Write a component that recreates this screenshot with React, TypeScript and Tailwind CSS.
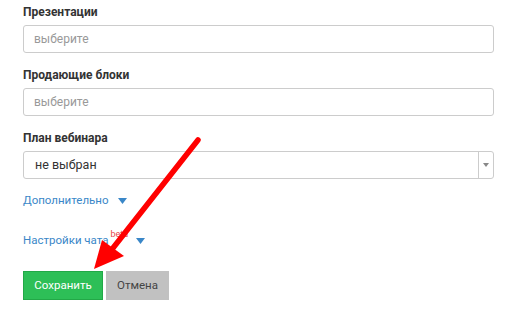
import React from "react";

const Tri = ({ cls }: { cls: string }) => (
  <svg width="9" height="6" viewBox="0 0 9 6" className={cls}>
    <path d="M0 0 L9 0 L4.5 6 Z" fill="currentColor" />
  </svg>
);

export default function App() {
  return (
    <div className="relative w-[519px] h-[312px] bg-white overflow-hidden" style={{ fontFamily: "Roboto, 'Noto Sans', sans-serif" }}>
      <div className="pl-[23px] pt-[4px] w-[494px] flex flex-col">
        <div className="text-[12px] leading-[16px] font-bold text-[#333] mb-[5px]">Презентации</div>
        <div className="h-[28px] border border-[#ccc] rounded-[3px] flex items-center pl-[10px] text-[12px] text-[#999] mb-[14px]">выберите</div>
        <div className="text-[12px] leading-[16px] font-bold text-[#333] mb-[5px]">Продающие блоки</div>
        <div className="h-[28px] border border-[#ccc] rounded-[3px] flex items-center pl-[10px] text-[12px] text-[#999] mb-[14px]">выберите</div>
        <div className="text-[12px] leading-[16px] font-bold text-[#333] mb-[5px]">План вебинара</div>
        <div className="h-[28px] border border-[#ccc] rounded-[3px] flex items-stretch text-[12.5px] text-[#333]">
          <div className="flex-1 flex items-center pl-[11px]">не выбран</div>
          <div className="w-[15px] border-l border-[#ccc] flex items-center justify-center">
            <svg width="6" height="4" viewBox="0 0 6 4"><path d="M0 0 L6 0 L3 4 Z" fill="#888" /></svg>
          </div>
        </div>
        <div className="mt-[14px] h-[16px] flex items-center text-[11.5px] text-[#3a87c8]">
          <span>Дополнительно</span>
          <Tri cls="ml-[9px] text-[#3a87c8]" />
        </div>
        <div className="mt-[24px] h-[16px] flex items-center text-[11.5px] text-[#3a87c8]">
          <span>Настройки чата</span>
          <span className="text-[9px] text-[#e8484a] relative -top-[6px] ml-[2px]">beta</span>
          <Tri cls="ml-[8px] text-[#3a87c8]" />
        </div>
        <div className="mt-[22px] flex gap-[3px]">
          <div className="w-[80px] h-[29px] bg-[#2dbf57] border border-[#22a847] text-white text-[11.5px] flex items-center justify-center">Сохранить</div>
          <div className="w-[63px] h-[29px] bg-[#c1c1c1] text-[#444] text-[11.5px] flex items-center justify-center">Отмена</div>
        </div>
      </div>
      <svg className="absolute left-0 top-0" width="519" height="312" viewBox="0 0 519 312">
        <line x1="198" y1="140" x2="113" y2="248" stroke="#ff0000" strokeWidth="5.5" strokeLinecap="round" />
        <path d="M94 269 L102 240 L124 256 Z" fill="#ff0000" />
      </svg>
    </div>
  );
}
